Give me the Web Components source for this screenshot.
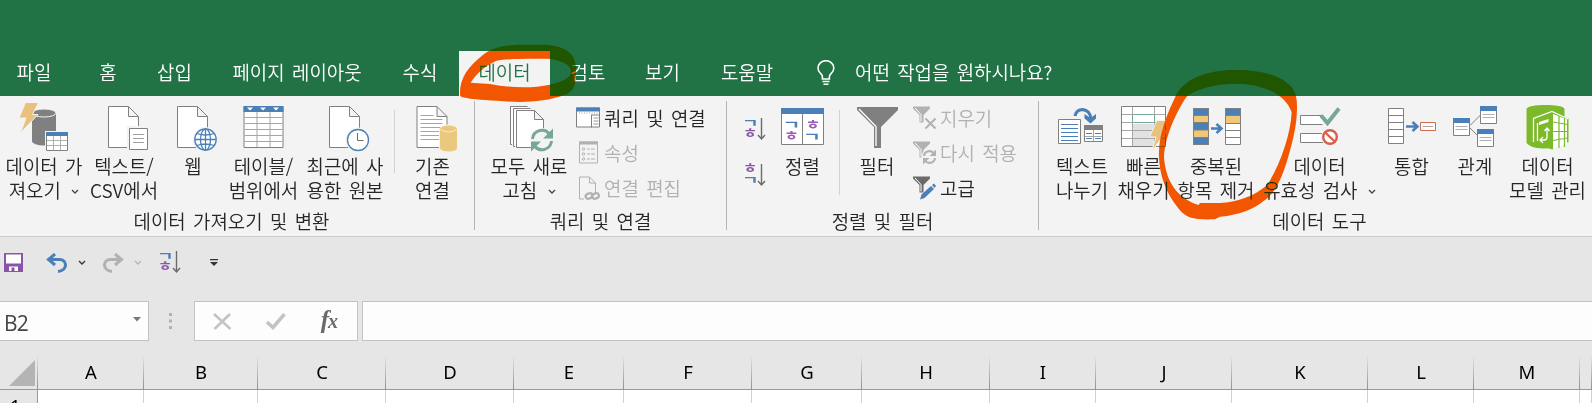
<!DOCTYPE html>
<html lang="ko">
<head>
<meta charset="utf-8">
<title>Excel</title>
<style>
    html, body { margin: 0; height: 100%; overflow: hidden; }
    body {
        font-family: "Noto Sans CJK KR DemiLight", "Noto Sans CJK KR", "Noto Sans", sans-serif;
        font-weight: 350;
        font-size: 18.9px;
        word-spacing: 2.1px;
        color: #262626;
        background: #e6e6e6;
    }
</style>
</head>
<body>
<excel-window></excel-window>

<script>
(function() {
    'use strict';

    function define(name, template, setup) {
        customElements.define(name, class extends HTMLElement {
            constructor() {
                super();
                this.attachShadow({mode: 'open'}).innerHTML = template;
            }

            connectedCallback() {
                if (this.hasAttribute('width')) {
                    this.style.width = this.getAttribute('width') + 'px';
                }
                if (setup) setup(this, this.shadowRoot);
            }
        });
    }

    // small down arrow beside a menu button
    define('menu-chevron', `
        <style>
            :host { display: inline-block; width: 8px; height: 6px; }
            svg { display: block; }
        </style>
        <svg width="8" height="6" fill="none" stroke="currentColor" stroke-width="1.3"><path d="M1 1l3 3 3-3"/></svg>
    `);

    define('ribbon-tab', `
        <style>
            :host {
                display: flex;
                align-items: center;
                justify-content: center;
                height: 45px;
                padding-bottom: 4px;
                flex: none;
                box-sizing: border-box;
                white-space: nowrap;
                color: #fff;
            }
            :host([active]) { background: #f3f3f3; color: #217346; margin-left: 12px; }
        </style>
        <slot></slot>
    `);

    define('ribbon-button', `
        <style>
            :host {
                display: flex;
                flex-direction: column;
                align-items: center;
                flex: none;
                line-height: 24px;
                text-align: center;
                white-space: nowrap;
            }
            ::slotted(svg) { display: block; flex: none; width: 60px; height: 50px; margin-bottom: 4px; overflow: visible; }
        </style>
        <slot name="icon"></slot>
        <div><slot></slot></div>
    `);

    define('ribbon-item', `
        <style>
            :host { display: flex; align-items: center; height: 35px; white-space: nowrap; }
            :host([disabled]) { color: #b1b1b1; }
            ::slotted(svg) { display: block; flex: none; width: 26px; height: 26px; margin-right: 2px; overflow: visible; }
        </style>
        <slot name="icon"></slot>
        <span><slot></slot></span>
    `);

    define('ribbon-rule', `
        <style>
            :host { display: block; flex: none; width: 1px; height: 63px; margin-top: 10px; background: #d2d2d2; }
        </style>
    `);

    define('ribbon-group', `
        <style>
            :host {
                display: grid;
                grid-template-rows: 108px 1fr;
                flex: none;
                height: 129px;
                margin-top: 5px;
                box-sizing: border-box;
                border-right: 1px solid #b4b4b4;
            }
            .items { display: flex; align-items: flex-start; margin-top: -1px; }
            .title { text-align: center; line-height: 24px; white-space: nowrap; }
        </style>
        <div class="items"><slot></slot></div>
        <div class="title"></div>
    `, function(el, root) {
        root.querySelector('.title').textContent = el.getAttribute('label');
    });

    define('sort-icon', `
        <style>
            :host { display: block; width: 21px; height: 23px; }
            svg { display: block; overflow: visible; }
            text { font: 700 13px "Noto Sans CJK KR", sans-serif; }
        </style>
        <svg width="21" height="23">
            <text class="top"></text>
            <text class="bottom"></text>
            <path d="M16.5 0v20M13 17l3.5 4 3.5-4" fill="none" stroke="#6b6b6b" stroke-width="1.4"/>
        </svg>
    `, function(el, root) {
        let color = {'ㄱ': '#4a7fb8', 'ㅎ': '#8a55a8'};
        let stretch = {'ㄱ': [-3.1, '1.4 .82'], 'ㅎ': [-1.9, '1.2 .92']};
        let letters = el.getAttribute('order');
        ['.top', '.bottom'].forEach(function(sel, i) {
            let text = root.querySelector(sel);
            let fit = stretch[letters[i]];
            text.textContent = letters[i];
            text.setAttribute('fill', color[letters[i]]);
            text.setAttribute('transform', 'translate(' + fit[0] + ' ' + (i ? 20.4 : 9.2) + ') scale(' + fit[1] + ')');
        });
    });

    define('excel-tabs', `
        <style>
            :host { display: flex; align-items: flex-end; height: 96px; background: #217346; }
            svg { flex: none; width: 20px; height: 26px; margin: 0 19px 10px 21px; }
        </style>
        <ribbon-tab width="68">파일</ribbon-tab>
        <ribbon-tab width="80">홈</ribbon-tab>
        <ribbon-tab width="53">삽입</ribbon-tab>
        <ribbon-tab width="192">페이지 레이아웃</ribbon-tab>
        <ribbon-tab width="54">수식</ribbon-tab>
        <ribbon-tab width="91" active>데이터</ribbon-tab>
        <ribbon-tab width="76">검토</ribbon-tab>
        <ribbon-tab width="73">보기</ribbon-tab>
        <ribbon-tab width="96">도움말</ribbon-tab>
        <svg fill="none" stroke="#fff" stroke-width="1.6">
            <path d="M6.4 19v-2.4C6.4 13.5 2 13 2 8.2a7.8 7.4 0 0 1 15.8 0c0 4.800-4.400 5.300-4.400 8.400V19zM6.500 21.500h7M7.500 24.300h5"/>
        </svg>
        <ribbon-tab>어떤 작업을 원하시나요?</ribbon-tab>
    `);

    define('excel-ribbon', `
        <style>
            :host {
                display: flex;
                height: 140px;
                background: #f3f3f3;
                border-bottom: 1px solid #cdcdcd;
                overflow: hidden;
            }
            .list { display: flex; flex-direction: column; }
            .sorts { display: grid; gap: 23px; margin: 18px 9px 0 18px; }
            menu-chevron { margin-left: 3px; vertical-align: 3px; color: #444; }
            .jamo { font: 700 14px "Noto Sans CJK KR", sans-serif; }
        </style>

        <ribbon-group label="데이터 가져오기 및 변환" style="width:486px;margin-left:-11px;padding-left:0">
            <ribbon-button width="88" style="margin-left:11px">
                <svg slot="icon" viewBox="14 101 60 50">
                    <path d="M32 114v28a12 4.500 0 0 0 24 0v-28z" fill="#808080"/>
                    <ellipse cx="44" cy="114" rx="12" ry="4" fill="#808080" stroke="#f3f3f3"/>
                    <path d="M25.500 103.500h13l-6 12h5.500L20.500 134l5.500-15h-7z" fill="#eac07d" stroke="#f3f3f3"/>
                    <path d="M45 132h24v21H45z" fill="#f3f3f3"/>
                    <path d="M46.500 133.500h21v18h-21z" fill="#fff" stroke="#808080"/>
                    <path d="M46 133h22v4H46z" fill="#4a7fb8"/>
                    <path d="M53.500 137v14M60.500 137v14M47 141.500h20M47 146.500h20" stroke="#b0b0b0"/>
                </svg>
                데이터 가<br>져오기 <menu-chevron></menu-chevron>
            </ribbon-button>
            <ribbon-button width="72">
                <svg slot="icon" viewBox="94 101 60 50">
                    <path d="M108.500 107.500h20l10 10v31h-30zM128.500 107.500v10h10" fill="#fff" stroke="#808080"/>
                    <path d="M127 127h22v24h-22z" fill="#f3f3f3"/>
                    <path d="M129.500 129.500h18v21h-18z" fill="#fff" stroke="#808080"/>
                    <path d="M133 135.500h11M133 139.500h11M133 143.500h11" stroke="#a0a0a0"/>
                </svg>
                텍스트/<br>CSV에서
            </ribbon-button>
            <ribbon-button width="66">
                <svg slot="icon" viewBox="163 101 60 50">
                    <path d="M177.500 107.500h20l10 10v31h-30zM197.500 107.500v10h10" fill="#fff" stroke="#808080"/>
                    <circle cx="205.500" cy="140.500" r="12.500" fill="#f3f3f3"/>
                    <g fill="#fff" stroke="#4a7fb8" stroke-width="1.300">
                        <circle cx="205.500" cy="140.500" r="10.700"/>
                        <ellipse cx="205.500" cy="140.500" rx="5" ry="10.700"/>
                        <path d="M205.500 130v21M195 140.500h21M197 134.500q8.500 3 17 0M197 146.500q8.500-3 17 0" fill="none"/>
                    </g>
                </svg>
                웹
            </ribbon-button>
            <ribbon-button width="75">
                <svg slot="icon" viewBox="233.500 101 60 50">
                    <path d="M243.500 107.500h39v41h-39z" fill="#fff" stroke="#808080"/>
                    <path d="M256.500 113v35M269.500 113v35M244 118.500h38M244 124.500h38M244 130.500h38M244 136.500h38M244 142.500h38" stroke="#a6a6a6"/>
                    <path d="M243 107h40v6h-40z" fill="#4a7fb8"/>
                    <path d="M246.500 108.500h6l-3 3zM259.500 108.500h6l-3 3zM272.500 108.500h6l-3 3z" fill="#fff"/>
                </svg>
                테이블/<br>범위에서
            </ribbon-button>
            <ribbon-button width="88">
                <svg slot="icon" viewBox="315 101 60 50">
                    <path d="M329.500 107.500h20l10 10v31h-30zM349.500 107.500v10h10" fill="#fff" stroke="#808080"/>
                    <circle cx="358" cy="141" r="12.500" fill="#f3f3f3"/>
                    <circle cx="358" cy="141" r="10.500" fill="#fff" stroke="#4a7fb8" stroke-width="1.300"/>
                    <path d="M357.500 134v7.500h6" fill="none" stroke="#6b6b6b"/>
                </svg>
                최근에 사<br>용한 원본
            </ribbon-button>
            <ribbon-rule style="margin-left:5px"></ribbon-rule>
            <ribbon-button width="75">
                <svg slot="icon" viewBox="402.500 101 60 50">
                    <path d="M416.500 107.500h20l10 10v31h-30zM436.500 107.500v10h10" fill="#fff" stroke="#808080"/>
                    <path d="M420 116.500h13M420 120.500h22M420 124.500h22M420 128.500h22M420 132.500h22M420 136.500h22M420 140.500h22" stroke="#a6a6a6"/>
                    <path d="M439 130v19a9 4 0 0 0 18 0v-19a9 4 0 0 0-18 0z" fill="#eac97f" stroke="#f3f3f3"/>
                    <path d="M440 130.500q8 5 16 0" fill="none" stroke="#f9ecd0"/>
                </svg>
                기존<br>연결
            </ribbon-button>
        </ribbon-group>

        <ribbon-group label="쿼리 및 연결" style="width:252px">
            <ribbon-button width="90" style="margin-left:9px">
                <svg slot="icon" viewBox="499 101 60 50">
                    <g fill="#fff" stroke="#808080">
                        <path d="M512 145.500h-1.500v-38h17"/>
                        <path d="M515 147.500h-1.500v-38h17"/>
                        <path d="M516.500 111.500h18l9 9v28h-27zM534.500 111.500v9h9"/>
                    </g>
                    <circle cx="542" cy="141" r="12" fill="#f3f3f3"/>
                    <g fill="none" stroke="#76a797" stroke-width="3">
                        <path d="M532.500 140a9.500 9.500 0 0 1 17-5M551.500 142a9.500 9.500 0 0 1-17 5"/>
                    </g>
                    <path d="M553 129.500v10h-10zM531 152.500v-10h10z" fill="#76a797"/>
                </svg>
                모두 새로<br>고침 <menu-chevron></menu-chevron>
            </ribbon-button>
            <div class="list" style="margin:0 0 0 2px">
                <ribbon-item>
                    <svg slot="icon" viewBox="576 104.500 26 26">
                        <path d="M576.500 107.500h23v19h-23z" fill="#fff" stroke="#808080"/>
                        <path d="M576 107h24v4h-24z" fill="#4a7fb8"/>
                        <path d="M591.500 114v13M592 114.500h8" stroke="#808080"/>
                        <path d="M579 112.500h19" stroke="#a0a0a0" stroke-dasharray="1 1.500"/>
                        <path d="M593.500 117.500h5M593.500 120.500h5M593.500 123.500h5" stroke="#9a9a9a"/>
                    </svg>
                    쿼리 및 연결
                </ribbon-item>
                <ribbon-item disabled>
                    <svg slot="icon" viewBox="576 139.500 26 26" fill="none" stroke="#b1b1b1">
                        <path d="M579.500 141.500h18v21h-18z"/>
                        <path d="M579 142.500h19" stroke-width="3"/>
                        <circle cx="583.500" cy="148.500" r="1.200"/><circle cx="583.500" cy="153.500" r="1.200"/><circle cx="583.500" cy="158.500" r="1.200"/>
                        <path d="M587 148.500h8M587 153.500h8M587 158.500h8" stroke-dasharray="3 1 5"/>
                    </svg>
                    속성
                </ribbon-item>
                <ribbon-item disabled>
                    <svg slot="icon" viewBox="576 174.500 26 26" fill="none" stroke="#b1b1b1">
                        <path d="M584 198.500h-4.500v-22h10l6 6v10M589.500 176.500v6h6"/>
                        <g stroke-width="2.200">
                            <ellipse cx="589" cy="195.500" rx="3.500" ry="2.500" transform="rotate(-20 589 195.500)"/>
                            <ellipse cx="595.500" cy="195.500" rx="3.500" ry="2.500" transform="rotate(-20 595.500 195.500)"/>
                        </g>
                    </svg>
                    연결 편집
                </ribbon-item>
            </div>
        </ribbon-group>

        <ribbon-group label="정렬 및 필터" style="width:312px">
            <div class="sorts">
                <sort-icon order="ㄱㅎ"></sort-icon>
                <sort-icon order="ㅎㄱ"></sort-icon>
            </div>
            <ribbon-button width="55">
                <svg slot="icon" viewBox="772 101 60 50">
                    <path d="M780.500 109.500h42v36h-42zM801.500 113v32" fill="#fff" stroke="#808080"/>
                    <path d="M780 109h43v6h-43z" fill="#4a7fb8"/>
                    <g class="jamo">
                        <text transform="translate(781.500 130) scale(1.400 .85)" fill="#4a7fb8">ㄱ</text>
                        <text transform="translate(783 141.300) scale(1.150 .92)" fill="#9a5fb5">ㅎ</text>
                        <text transform="translate(804.600 129.500) scale(1.150 .92)" fill="#9a5fb5">ㅎ</text>
                        <text transform="translate(802 142) scale(1.400 .85)" fill="#4a7fb8">ㄱ</text>
                    </g>
                </svg>
                정렬
            </ribbon-button>
            <ribbon-rule style="margin-left:9px;height:85px"></ribbon-rule>
            <ribbon-button width="52" style="margin-left:11px">
                <svg slot="icon" viewBox="847 101 60 50">
                    <path d="M857 108h41v3l-17 17v21h-7v-21l-17-17z" fill="#808080"/>
                    <path d="M859 110l17 17.500V147" fill="none" stroke="#fff" stroke-width="1.300"/>
                </svg>
                필터
            </ribbon-button>
            <div class="list" style="margin-left:9px">
                <ribbon-item disabled>
                    <svg slot="icon" viewBox="912 104.500 26 26">
                        <path d="M913 106h17v2l-6.500 6.500V122h-4v-7.500L913 108z" fill="#b1b1b1"/>
                        <path d="M915 107.500l6 6.500v7" fill="none" stroke="#fff"/>
                        <path d="M925.500 118l10 10M935.500 118l-10 10" stroke="#b1b1b1" stroke-width="2"/>
                    </svg>
                    지우기
                </ribbon-item>
                <ribbon-item disabled>
                    <svg slot="icon" viewBox="912 139.500 26 26">
                        <path d="M913 141h17v2l-6.500 6.500V157h-4v-7.500L913 143z" fill="#b1b1b1"/>
                        <path d="M915 142.500l6 6.500v7" fill="none" stroke="#fff"/>
                        <circle cx="929.500" cy="156.500" r="8" fill="#f3f3f3"/>
                        <path d="M924 155.500a5.500 5.500 0 0 1 10-2.500M935 157.500a5.500 5.500 0 0 1-10 2.500" fill="none" stroke="#b1b1b1" stroke-width="2.200"/>
                        <path d="M936 149v6.500h-6.500zM923 164v-6.500h6.500z" fill="#b1b1b1"/>
                    </svg>
                    다시 적용
                </ribbon-item>
                <ribbon-item>
                    <svg slot="icon" viewBox="912 174.500 26 26">
                        <path d="M913 176h17v2l-6.500 6.500V192h-4v-7.500L913 178z" fill="#6b6b6b"/>
                        <path d="M915 177.500l6 6.500v7" fill="none" stroke="#fff"/>
                        <path d="M920 199l1.500-5L931 185.500l3 3-9.500 9zM932 184.500l2-1.500 2 2.500-1.500 2z" fill="#4a7fb8"/>
                    </svg>
                    고급
                </ribbon-item>
            </div>
        </ribbon-group>

        <ribbon-group label="데이터 도구" style="width:562px">
            <ribbon-button width="58" style="margin-left:14px">
                <svg slot="icon" viewBox="1053 101 60 50">
                    <path d="M1059.500 120.500h22v24h-22z" fill="#fff" stroke="#808080"/>
                    <path d="M1062 125.500h17M1062 129.500h17M1062 133.500h17M1062 137.500h17M1062 141.500h17" stroke="#4a7fb8"/>
                    <path d="M1085.500 127.500h18v15h-18z" fill="#fff" stroke="#808080"/>
                    <path d="M1085 126h19v5h-19z" fill="#808080"/>
                    <path d="M1094.500 131v11M1086 137.500h17" stroke="#a6a6a6"/>
                    <path d="M1087 134.500h6M1096 134.500h6M1087 139.500h6M1096 139.500h6" stroke="#4a7fb8"/>
                    <path d="M1076 117c1-9 15-9 16 3" fill="none" stroke="#4a7fb8" stroke-width="3.200"/>
                    <path d="M1085.500 115l6 4 5.500-4v4.500l-5.500 5-6-5z" fill="#4a7fb8"/>
                </svg>
                텍스트<br>나누기
            </ribbon-button>
            <ribbon-button width="65">
                <svg slot="icon" viewBox="1114 101 60 50">
                    <path d="M1121.500 107.500h44v40h-44z" fill="#fff"/>
                    <path d="M1133 125h21v22h-21z" fill="#e1e1e1"/>
                    <path d="M1132.500 108v39M1154.500 108v39M1122 115.500h43M1122 123.500h43M1122 131.500h43M1122 139.500h43" stroke="#a6a6a6"/>
                    <path d="M1121.500 107.500h44v40h-44z" fill="none" stroke="#808080"/>
                    <path d="M1132.500 115.500h22v8h-22z" fill="#fff" stroke="#76a797"/>
                    <path d="M1157 121.500h10l-4.500 10h5l-16 21 4.500-14.500h-6.500z" fill="#eac07d" stroke="#f3f3f3"/>
                </svg>
                빠른<br>채우기
            </ribbon-button>
            <ribbon-button width="80">
                <svg slot="icon" viewBox="1186 101 60 50">
                    <path d="M1193 109h16v37h-16z" fill="#4a7fb8"/>
                    <path d="M1193 116.500h16v7.500h-16zM1193 131h16v7.500h-16z" fill="#f0c776"/>
                    <path d="M1225 109h16v37h-16z" fill="#fff"/>
                    <path d="M1225 109h16v8h-16z" fill="#4a7fb8"/>
                    <path d="M1225 117h16v7h-16z" fill="#f0c776"/>
                    <path d="M1193.500 109.500h15v36h-15zM1225.500 109.500h15v36h-15zM1193.500 116.500h15M1193.500 123.500h15M1193.500 131h15M1193.500 138.500h15M1225.500 116.500h15M1225.500 124.500h15M1225.500 131.500h15M1225.500 138.500h15" fill="none" stroke="#808080"/>
                    <path d="M1211 129.500h9M1216.500 125l5 4.500-5 4.500" fill="none" stroke="#4a7fb8" stroke-width="2.500"/>
                </svg>
                중복된<br>항목 제거
            </ribbon-button>
            <ribbon-button width="127">
                <svg slot="icon" viewBox="1290 101 60 50">
                    <path d="M1323 116.500h-22.500v9h22M1323 134.500h-22.500v9h23" fill="#fff" stroke="#808080"/>
                    <path d="M1321 116.500l6.500 7.500 11.500-14.500" fill="none" stroke="#76a797" stroke-width="4"/>
                    <circle cx="1330" cy="138" r="9" fill="#f3f3f3"/>
                    <circle cx="1330" cy="138" r="6.800" fill="#fff" stroke="#d8604a" stroke-width="2.400"/>
                    <path d="M1325.200 133.500l9.500 9" stroke="#d8604a" stroke-width="2.400"/>
                </svg>
                데이터<br>유효성 검사 <menu-chevron></menu-chevron>
            </ribbon-button>
            <ribbon-button width="57">
                <svg slot="icon" viewBox="1382 101 60 50">
                    <path d="M1388.500 109.500h15v35h-15zM1388.500 116.500h15M1388.500 123.500h15M1388.500 130.500h15M1388.500 137.500h15" fill="#fff" stroke="#808080"/>
                    <path d="M1406 127.500h10M1412.500 123l5 4.500-5 4.500" fill="none" stroke="#4a7fb8" stroke-width="2.500"/>
                    <path d="M1420.500 123.500h15v8h-15z" fill="#fff" stroke="#d06a4e"/>
                    <path d="M1423 127.500h10" stroke="#b0a09a"/>
                </svg>
                통합
            </ribbon-button>
            <ribbon-button width="70">
                <svg slot="icon" viewBox="1444 101 60 50">
                    <path d="M1469 126.500l11-11M1469 129l8 8" stroke="#808080"/>
                    <g fill="#fff" stroke="#808080">
                        <path d="M1452.500 119.500h16v17h-16zM1479.500 107.500h16v17h-16zM1476.500 130.500h16v17h-16z"/>
                        <path d="M1454.500 127.500h12M1454.500 130.500h12M1481.500 115.500h12M1481.500 118.500h12M1478.500 138.500h12M1478.500 141.500h12" stroke="#b0b0b0"/>
                    </g>
                    <path d="M1452 119h17v5h-17zM1479 107h17v5h-17zM1476 130h17v5h-17z" fill="#4a7fb8"/>
                </svg>
                관계
            </ribbon-button>
            <ribbon-button width="75">
                <svg slot="icon" viewBox="1516.500 101 60 50">
                    <path d="M1525 110c0-5.500 38-5.500 38 0v34q-8 6-22 5.500-12-.5-16-5.500z" fill="#7cba2c"/>
                    <path d="M1530.500 119l20-7.500 16.500 8v23.500l-16.500 7.500-20-7.500z" fill="#7cba2c"/>
                    <path d="M1551.500 115l14 5.500v24.500l-14 5z" fill="#fff"/>
                    <path d="M1551 123l15 2.500M1551 132.500h15M1551 141.500l15-2.500M1557.500 116v33M1563 118v30" fill="none" stroke="#7cba2c" stroke-width="1.200"/>
                    <g fill="none" stroke="#fff" stroke-width="1.300">
                        <path d="M1532 143v-23.500l18.500-7 16 7.500M1536 142v-18"/>
                        <path d="M1545.500 129v9q0 3-3 3h-3M1543 132l2.500-3 2.500 3M1541.500 138l-3 3 3 3"/>
                    </g>
                    <path d="M1537.500 123l9.500-3v3l-9.500 3z" fill="#fff"/>
                </svg>
                데이터<br>모델 관리
            </ribbon-button>
        </ribbon-group>
    `);

    define('quick-access', `
        <style>
            :host { display: flex; align-items: center; height: 51px; padding: 0 0 13px 4px; box-sizing: content-box; }
            svg { flex: none; display: block; }
            sort-icon { margin-left: 18px; }
            menu-chevron { margin-left: 10px; color: #333; }
            menu-chevron[off] { color: #b5b5b5; }
        </style>
        <svg width="19" height="19">
            <path d="M0 0h19v19H0z" fill="#8a55a8"/>
            <path d="M2 1.500h15v9H2zM5 13.500h9V18H5z" fill="#fff"/>
            <path d="M7.500 14.500h3V18h-3z" fill="#8a55a8"/>
        </svg>
        <svg width="22" height="20" style="margin-left:23px" fill="none" stroke="#4a7fb8" stroke-width="3">
            <path d="M9 1L2.500 6.500 9 12M3 6.500h10.500c8 0 8.500 11-1.500 12"/>
        </svg>
        <menu-chevron></menu-chevron>
        <svg width="22" height="20" style="margin-left:16px" fill="none" stroke="#b1b1b1" stroke-width="3">
            <path d="M13 1l6.500 5.500L13 12M19 6.500H8.500C.5 6.500 0 17.500 10 18.500"/>
        </svg>
        <menu-chevron off></menu-chevron>
        <sort-icon order="ㄱㅎ"></sort-icon>
        <svg width="8" height="8" style="margin-left:29px"><path d="M0 0h8v1.300H0zM0 3h8L4 7z" fill="#333"/></svg>
    `);

    define('formula-bar', `
        <style>
            :host { display: flex; height: 40px; }
            div { box-sizing: border-box; height: 40px; background: #fdfdfd; border: 1px solid #c3c3c3; display: flex; align-items: center; }
            .name {
                width: 149px;
                border-left: none;
                padding: 3px 7px 0 4px;
                justify-content: space-between;
                font: 400 21px "Open Sans", sans-serif;
                letter-spacing: -.8px;
                color: #444;
            }
            .name svg { margin-bottom: 6px; }
            .dots { margin: 12px 22px 0 20px; }
            .tools { width: 164px; padding: 0 18px; justify-content: space-between; }
            .fx { font: italic 700 25px/30px "Liberation Serif", serif; letter-spacing: -1px; color: #6a6a6a; margin: 0 2px 2px 0; }
            .fx small { font-size: 20px; }
            .text { flex: 1; margin-left: 4px; border-right: none; }
            svg { flex: none; display: block; }
        </style>
        <div class="name">B2<svg width="8" height="5"><path d="M0 0h8L4 4.500z" fill="#777"/></svg></div>
        <svg class="dots" width="3" height="17" fill="#b1b1b1"><path d="M0 0h3v3H0zM0 6.500h3v3H0zM0 13h3v3H0z"/></svg>
        <div class="tools">
            <svg width="19" height="17" stroke="#c3c3c3" stroke-width="2.500" fill="none"><path d="M1 1l16.500 15M17 1L1.500 16"/></svg>
            <svg width="20" height="17" stroke="#c3c3c3" stroke-width="3.500" fill="none"><path d="M1 9l6 5.500L18.500 1"/></svg>
            <span class="fx">f<small>x</small></span>
        </div>
        <div class="text"></div>
    `);

    define('sheet-grid', `
        <style>
            :host {
                display: grid;
                grid-template: 34px 1fr / 38px 106px 114px 128px 128px 110px 128px 110px 128px 106px 136px 136px 106px 106px 1fr;
                margin-top: 14px;
                height: 48px;
                font: 400 18.500px/34px "Noto Sans", sans-serif;
                color: #000;
            }
            span { box-sizing: border-box; }
            .head {
                height: 35px;
                text-align: center;
                background: linear-gradient(#e6e6e6, #909090) right / 1px 100% no-repeat;
                border-bottom: 1px solid #999;
                line-height: 33px;
            }
            .cell { border-right: 1px solid #d0d0d0; background: #fff; margin-top: 1px; }
            .row { background: #e6e6e6; border-right: 1px solid #999; padding-left: 10px; line-height: 32px; overflow: hidden; margin-top: 1px; }
            .corner { display: flex; justify-content: flex-end; padding: 5px 3px 0 0; }
        </style>
        <span class="head corner"><svg width="26" height="26"><path d="M26 0v26H0z" fill="#b4b4b4"/></svg></span>
    `, function(el, root) {
        let names = 'ABCDEFGHIJKLM'.split('').concat('');
        let html = '';
        names.forEach(function(name) {
            html += '<span class="head">' + name + '</span>';
        });
        html += '<span class="row">1</span>';
        names.forEach(function() {
            html += '<span class="cell"></span>';
        });
        root.querySelector('.corner').insertAdjacentHTML('afterend', html);
    });

    // highlighter strokes, lying over the tabs and the ribbon
    define('marker-layer', `
        <style>
            :host { position: absolute; inset: 0; mix-blend-mode: darken; pointer-events: none; }
            svg { display: block; }
        </style>
        <svg width="1592" height="403" fill="#f65600" fill-rule="evenodd">
            <path transform="translate(390 40) scale(.3333)" d="M210 165C208 115 235 80 275 48 305 22 345 14 400 14L465 14C525 17 558 40 558 85 560 130 552 158 520 166 470 186 400 188 340 184 290 180 245 178 230 174 218 172 210 170 210 165ZM242 128C260 100 285 78 320 62 350 56 430 56 480 57 520 62 543 78 543 95 543 115 515 125 480 134 430 145 360 144 300 132Z"/>
            <path transform="translate(1040 50) scale(.3333)" d="M590 60C510 57 430 85 406 140 385 185 354 250 357 320 358 370 375 425 415 475 440 508 465 509 525 508L540 500C600 495 645 475 672 452 720 420 740 340 757 275 770 225 773 180 770 150 765 90 690 60 590 60ZM590 102C530 100 465 118 440 140 415 175 375 255 372 320 376 380 400 440 476 465L480 459 540 459C590 457 640 440 682 405 720 345 752 255 755 187 735 125 650 100 590 102Z"/>
        </svg>
    `);

    define('excel-window', `
        <style>
            :host { display: block; position: relative; width: 1592px; height: 403px; overflow: hidden; isolation: isolate; background: #e6e6e6; }
        </style>
        <excel-tabs></excel-tabs>
        <excel-ribbon></excel-ribbon>
        <quick-access></quick-access>
        <formula-bar></formula-bar>
        <sheet-grid></sheet-grid>
        <marker-layer></marker-layer>
    `);
})();
</script>
</body>
</html>
